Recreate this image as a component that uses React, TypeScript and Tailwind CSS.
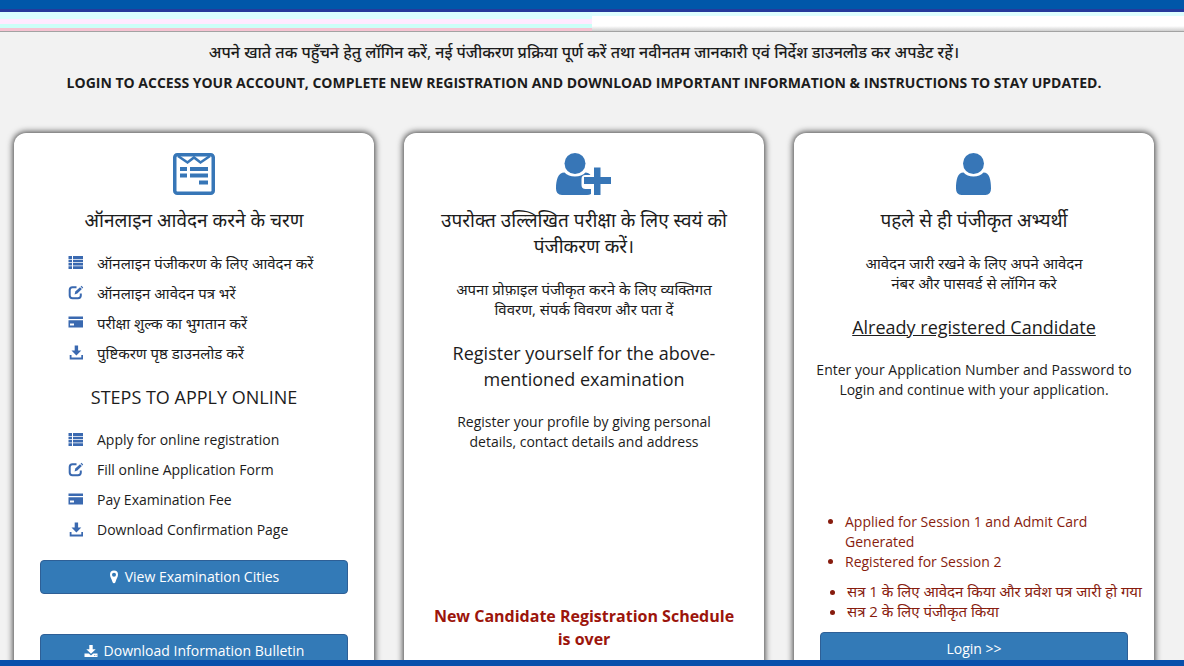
import type { ReactNode } from "react";

type IconProps = { className?: string };

function FormIcon() {
  return (
    <svg viewBox="0 0 42 42" className="h-[42px] w-[42px]" aria-hidden="true">
      <rect x="1.75" y="1.75" width="38.5" height="38.5" rx="2.5" fill="none" stroke="currentColor" strokeWidth="3.5" />
      <path d="M5 3 L14.5 9.500 L21 4.500 L27.5 9.500 L37 3" fill="none" stroke="currentColor" strokeWidth="2.600" />
      <path
        d="M7 14h7v4H7z M17 14h18v4H17z M7 20.500h7v4H7z M17 20.500h18v4H17z M26 27.500h9v4H26z"
        fill="currentColor"
      />
    </svg>
  );
}

function UserPlusIcon() {
  return (
    <svg viewBox="0 0 56 42" className="h-[42px] w-[56px]" aria-hidden="true">
      <circle cx="19" cy="10.5" r="10.5" fill="currentColor" />
      <path
        d="M8.5 19.5C11 22 14.500 23.500 19 23.500s8-1.500 10.500-4C31.500 19.800 33.500 20.600 34.500 22H29.500Q25.500 22 25.500 26V32Q25.500 36 29.500 36H35V41Q33.500 42 31 42H6Q0 42 0 35.500C0 27 2 19.500 8.500 19.500Z"
        fill="currentColor"
      />
      <path d="M38 14.500h6.500v9.500H55v7H44.500V42H38V31H28v-7h10z" fill="currentColor" />
    </svg>
  );
}

function UserIcon() {
  return (
    <svg viewBox="0 0 36 42" className="h-[42px] w-[36px]" aria-hidden="true">
      <circle cx="17.500" cy="10.500" r="10.500" fill="currentColor" />
      <path
        d="M7.500 19.500C10 22 13 23.500 17.500 23.500s7.500-1.500 10-4C33.500 19.500 35 27 35 35.500Q35 42 29.500 42H5.500Q0 42 0 35.500C0 27 1.500 19.500 7.500 19.500Z"
        fill="currentColor"
      />
    </svg>
  );
}

function ListIcon({ className }: IconProps) {
  return (
    <svg viewBox="0 0 16 16" className={className} fill="currentColor" aria-hidden="true">
      <path d="M.5 1H4v3H.5zM5 1h10v3H5zM.5 4.700H4v2.600H.5zM5 4.700h10v2.600H5zM.5 8H4v2.600H.5zM5 8h10v2.600H5zM.5 11.300H4V14H.5zM5 11.300h10V14H5z" />
    </svg>
  );
}

function EditIcon({ className }: IconProps) {
  return (
    <svg viewBox="0 0 16 16" className={className} fill="none" stroke="currentColor" aria-hidden="true">
      <path d="M8.500 2.200H4.500Q1.700 2.200 1.700 5v5.500Q1.700 13.200 4.500 13.200h5.500Q12.800 13.200 12.800 10.500V8.500" strokeWidth="2" />
      <path d="M6.600 9.400l.7-2.800L12 2.200l1.900 1.900L9.300 8.600z" fill="currentColor" stroke="none" />
      <path d="M12.600 1.600l.8-.8 1.800 1.800-.8.8z" fill="currentColor" stroke="none" />
    </svg>
  );
}

function CardIcon({ className }: IconProps) {
  return (
    <svg viewBox="0 0 16 16" className={className} fill="currentColor" aria-hidden="true">
      <path fillRule="evenodd" d="M.5 1.500H15v2.500H.5zM.5 5.200H15V12.500H.5zM2 8.500v2h4v-2z" />
    </svg>
  );
}

function DownloadIcon({ className }: IconProps) {
  return (
    <svg viewBox="0 0 16 16" className={className} fill="currentColor" aria-hidden="true">
      <path d="M6.700 .5h3.400v5h3.200L8.400 10.500 3.500 5.500h3.200z" />
      <path d="M1.700 10h1.800v2.500h9.800V10H15v4.500H1.700z" />
    </svg>
  );
}

function TrayIcon({ className }: IconProps) {
  return (
    <svg viewBox="0 0 14 14" className={className} fill="currentColor" aria-hidden="true">
      <path d="M5.300 1h3.400v4.300h3L7 9.800 2.300 5.300h3z" />
      <path fillRule="evenodd" d="M.5 9.500h4.300L7 11.500l2.200-2h4.300V13H.5zM10 11v.8h.8V11zM11.700 11v.8h.8V11z" />
    </svg>
  );
}

function PinIcon({ className }: IconProps) {
  return (
    <svg viewBox="0 0 10 14" className={className} fill="currentColor" aria-hidden="true">
      <path fillRule="evenodd" d="M5 .5a4 4 0 0 1 4 4c0 2.400-1.300 3.700-2.500 7.500Q6.100 13.300 5 13.300T3.500 12C2.300 8.200 1 6.900 1 4.500a4 4 0 0 1 4-4zM5 2.800a2 2 0 1 0 0 4 2 2 0 0 0 0-4z" />
    </svg>
  );
}

const stepIcons = [ListIcon, EditIcon, CardIcon, DownloadIcon];

const hindiSteps = [
  "ऑनलाइन पंजीकरण के लिए आवेदन करें",
  "ऑनलाइन आवेदन पत्र भरें",
  "परीक्षा शुल्क का भुगतान करें",
  "पुष्टिकरण पृष्ठ डाउनलोड करें",
];

const englishSteps = [
  "Apply for online registration",
  "Fill online Application Form",
  "Pay Examination Fee",
  "Download Confirmation Page",
];

function Steps({ items }: { items: string[] }) {
  return (
    <ul className="pl-[54px]">
      {items.map((item, i) => {
        const Icon = stepIcons[i];
        return (
          <li key={item} className="flex h-[30px] items-center gap-[13px]">
            <Icon className="h-4 w-4 shrink-0 text-[#3a69b0]" />
            <span className="whitespace-nowrap">{item}</span>
          </li>
        );
      })}
    </ul>
  );
}

function Card({ icon, children }: { icon: ReactNode; children: ReactNode }) {
  return (
    <section className="flex flex-col rounded-t-[12px] bg-white pt-5 shadow-[0_0_6px_1px_rgba(0,0,0,0.75)]">
      <div className="flex justify-center text-[#3776b7]">{icon}</div>
      {children}
    </section>
  );
}

function Title({ children }: { children: ReactNode }) {
  return <h2 className="text-center text-[18px] leading-[26px]">{children}</h2>;
}

function HindiTitle({ children }: { children: ReactNode }) {
  return (
    <h2 lang="hi" className="text-center text-[19px] leading-[26px]">
      {children}
    </h2>
  );
}

const buttonClass =
  "flex h-[34px] items-center justify-center gap-[6px] rounded-[4px] border border-[#2e5f96] bg-[#337ab7] text-white";

export default function App() {
  return (
    <div className="flex h-screen flex-col overflow-hidden bg-[#f2f2f2] font-['Open_Sans','Noto_Sans',sans-serif] text-[14px] leading-5 text-[#1c1c1c]">
      <div className="h-3 shrink-0 border-b-[3px] border-[#253a9c] bg-[#0057a9]" />
      <div className="flex h-5 shrink-0 border-b border-[#a3a3a3]">
        <div className="flex w-1/2 flex-col">
          <div className="h-[7px] bg-[#d9ffff]" />
          <div className="h-[5px] bg-[#ffeaff]" />
          <div className="h-[4px] bg-[#ccfff8]" />
          <div className="flex-1 bg-[#f6c3d2]" />
        </div>
        <div className="flex w-1/2 flex-col">
          <div className="h-[4px] bg-[#ddffff]" />
          <div className="h-[10px] bg-white" />
          <div className="flex-1 bg-linear-to-b from-white to-[#cfcfcf]" />
        </div>
      </div>

      <main className="flex min-h-0 flex-1 flex-col overflow-hidden pr-[30px] pl-[14px]">
        <header className="pt-[9px] pb-10 text-center">
          <p lang="hi" className="text-[16px] leading-[22px] font-medium">
            अपने खाते तक पहुँचने हेतु लॉगिन करें, नई पंजीकरण प्रक्रिया पूर्ण करें तथा नवीनतम जानकारी एवं निर्देश डाउनलोड कर अपडेट रहें।
          </p>
          <h1 className="mt-[10px] font-bold">
            LOGIN TO ACCESS YOUR ACCOUNT, COMPLETE NEW REGISTRATION AND DOWNLOAD IMPORTANT INFORMATION &amp; INSTRUCTIONS TO STAY UPDATED.
          </h1>
        </header>

        <div className="grid flex-1 grid-cols-3 gap-[30px]">
          <Card icon={<FormIcon />}>
            <div className="mt-3">
              <HindiTitle>ऑनलाइन आवेदन करने के चरण</HindiTitle>
            </div>
            <div lang="hi" className="mt-[15px] text-[15px]">
              <Steps items={hindiSteps} />
            </div>
            <div className="mt-4">
              <Title>STEPS TO APPLY ONLINE</Title>
            </div>
            <div className="mt-[15px]">
              <Steps items={englishSteps} />
            </div>
            <div className="mt-[15px] flex flex-col gap-10 px-[26px]">
              <button type="button" className={buttonClass}>
                <PinIcon className="h-[14px] w-[10px]" />
                View Examination Cities
              </button>
              <button type="button" className={buttonClass}>
                <TrayIcon className="h-[14px] w-[14px]" />
                Download Information Bulletin
              </button>
            </div>
          </Card>

          <Card icon={<UserPlusIcon />}>
            <div className="mt-3 px-5 text-center">
              <HindiTitle>उपरोक्त उल्लिखित परीक्षा के लिए स्वयं को पंजीकरण करें।</HindiTitle>
              <p lang="hi" className="mt-5 px-[30px] text-[15px] leading-5">
                अपना प्रोफ़ाइल पंजीकृत करने के लिए व्यक्तिगत विवरण, संपर्क विवरण और पता दें
              </p>
              <div className="mt-[21px]">
                <Title>
                  Register yourself for the above-
                  <br />
                  mentioned examination
                </Title>
              </div>
              <p className="mt-5 px-7">Register your profile by giving personal details, contact details and address</p>
              <p className="mt-[153px] text-[16px] leading-[23px] font-bold text-[#9c150c]">
                New Candidate Registration Schedule
                <br />
                is over
              </p>
            </div>
          </Card>

          <Card icon={<UserIcon />}>
            <div className="mt-3 px-5 text-center">
              <HindiTitle>पहले से ही पंजीकृत अभ्यर्थी</HindiTitle>
              <p lang="hi" className="mt-5 text-[15px] leading-5">
                आवेदन जारी रखने के लिए अपने आवेदन
                <br />
                नंबर और पासवर्ड से लॉगिन करे
              </p>
              <div className="mt-[21px]">
                <Title>
                  <span className="underline">Already registered Candidate</span>
                </Title>
              </div>
              <p className="mt-5">Enter your Application Number and Password to Login and continue with your application.</p>
            </div>
            <div className="mt-28 text-[#871c0e]">
              <ul className="list-disc pr-5 pl-[51px]">
                <li>Applied for Session 1 and Admit Card Generated</li>
                <li>Registered for Session 2</li>
              </ul>
              <ul lang="hi" className="mt-[9px] list-disc pl-[53px] text-[15px] leading-5 whitespace-nowrap">
                <li>सत्र 1 के लिए आवेदन किया और प्रवेश पत्र जारी हो गया</li>
                <li>सत्र 2 के लिए पंजीकृत किया</li>
              </ul>
            </div>
            <div className="mt-[11px] flex flex-col px-[26px]">
              <button type="button" className={buttonClass}>
                Login &gt;&gt;
              </button>
            </div>
          </Card>
        </div>
      </main>

      <footer className="h-[6px] shrink-0 bg-[#084fab]" />
    </div>
  );
}
